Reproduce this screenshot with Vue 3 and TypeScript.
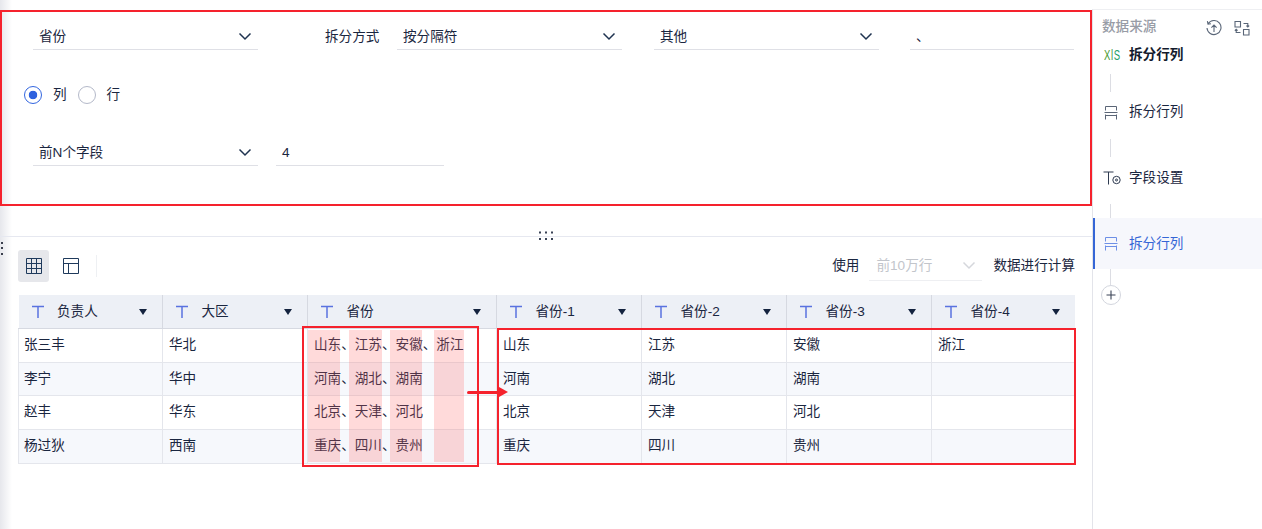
<script setup lang="ts">
interface Col { name: string; w: number }
const cols: Col[] = [
  { name: '负责人', w: 144 }, { name: '大区', w: 145 }, { name: '省份', w: 189 },
  { name: '省份-1', w: 145 }, { name: '省份-2', w: 145 }, { name: '省份-3', w: 145 }, { name: '省份-4', w: 143 },
]
const rows: string[][] = [
  ['张三丰', '华北', '山东、江苏、安徽、浙江', '山东', '江苏', '安徽', '浙江'],
  ['李宁', '华中', '河南、湖北、湖南', '河南', '湖北', '湖南', ''],
  ['赵丰', '华东', '北京、天津、河北', '北京', '天津', '河北', ''],
  ['杨过狄', '西南', '重庆、四川、贵州', '重庆', '四川', '贵州', ''],
]
const bars = [
  { left: 290, width: 32 }, { left: 331, width: 33 }, { left: 372, width: 32 }, { left: 416, width: 30 },
]
</script>

<template>
  <div class="root">
    <main class="main">
      <div class="edge"></div>
      <section class="panel">
        <div class="line first">
          <div class="field sel w225"><span>省份</span><svg class="chev" viewBox="0 0 14 9"><path d="M1.5 1.5 7 7l5.5-5.5" /></svg></div>
          <span class="lab">拆分方式</span>
          <div class="field sel w225"><span>按分隔符</span><svg class="chev" viewBox="0 0 14 9"><path d="M1.5 1.5 7 7l5.5-5.5" /></svg></div>
          <div class="field sel w225 g32"><span>其他</span><svg class="chev" viewBox="0 0 14 9"><path d="M1.5 1.5 7 7l5.5-5.5" /></svg></div>
          <div class="field w164 g31"><span>、</span></div>
        </div>
        <div class="radios">
          <span class="radio on"></span><span class="rtext">列</span>
          <span class="radio"></span><span class="rtext">行</span>
        </div>
        <div class="line third">
          <div class="field sel w225"><span>前N个字段</span><svg class="chev" viewBox="0 0 14 9"><path d="M1.5 1.5 7 7l5.5-5.5" /></svg></div>
          <div class="field w168 g18"><span>4</span></div>
        </div>
      </section>

      <div class="split">
        <svg class="grip" viewBox="0 0 15 10" width="15" height="10"><path d="M1 1.5h2v2H1zM7 1.5h2v2H7zM13 1.5h2v2h-2zM1 8h2v2H1zM7 8h2v2H7zM13 8h2v2h-2z" /></svg>
      </div>
      <svg class="vgrip" viewBox="0 0 4 14" width="4" height="14"><path d="M1 0h2v2H1zM1 5h2v2H1zM1 11h2v2H1z" /></svg>

      <div class="tools">
        <button class="tbtn active">
          <svg viewBox="0 0 16 16" width="16" height="16"><path d="M.5.5h15v15H.5zM5.5.5v15M10.5.5v15M.5 5.5h15M.5 10.5h15" /></svg>
        </button>
        <button class="tbtn">
          <svg viewBox="0 0 16 16" width="16" height="16"><path d="M.5.5h15v15H.5zM.5 5.5h15M5.5 5.5v10" /></svg>
        </button>
        <span class="tsep"></span>
        <span class="use">使用</span>
        <div class="limit"><span>前10万行</span><svg class="chev pale" viewBox="0 0 14 9"><path d="M1.5 1.5 7 7l5.5-5.5" /></svg></div>
        <span class="calc">数据进行计算</span>
      </div>

      <div class="tablewrap">
        <table class="grid">
          <colgroup><col v-for="c in cols" :key="c.name" :style="{ width: c.w + 'px' }" /></colgroup>
          <thead>
            <tr>
              <th v-for="c in cols" :key="c.name">
                <div class="th">
                  <svg class="tee" viewBox="0 0 14 14"><path d="M1 1.5h12M7 1.5V13" /></svg>
                  <span class="thname">{{ c.name }}</span>
                  <span class="caret"></span>
                </div>
              </th>
            </tr>
          </thead>
          <tbody>
            <tr v-for="(r, i) in rows" :key="i" :class="i % 2 === 1 ? 'alt' : 'odd'">
              <td v-for="(v, j) in r" :key="j">{{ v }}</td>
            </tr>
          </tbody>
        </table>
        <span v-for="b in bars" :key="b.left" class="bar" :style="{ left: b.left + 'px', width: b.width + 'px' }"></span>
        <span class="box leftbox"></span>
        <span class="box rightbox"></span>
        <span class="arrow"></span>
      </div>
    </main>

    <aside class="side">
      <div class="shead">
        <span class="stitle">数据来源</span>
        <svg class="hicon i1" viewBox="0 0 16 16"><path d="M2.2 3.6A7 7 0 1 1 1 8M1.4 1.2 2 4.2l3-.4M8 12V5.2M5.4 7.6 8 5l2.6 2.6" /></svg>
        <svg class="hicon i2" viewBox="0 0 16 16"><path d="M1 1.5h5.5V7H1zM9.5 9.5H15V15H9.5zM9.5 3.5h4.3V6.8M12.4 5.6l1.4 1.4 1.4-1.4M6.5 12.5H2.2V9.2M.8 10.6l1.4-1.4 1.4 1.4" /></svg>
      </div>
      <div class="step s1"><span class="xls"><span class="xlsin"><i>X</i><b>l</b><em>S</em></span></span><strong>拆分行列</strong></div>
      <span class="conn c1"></span>
      <div class="step s2">
        <svg class="sicon" viewBox="0 0 14 14"><path d="M1.5 4.5V.5h11v4M.5 6.5h13M1.5 8.5v5M12.5 8.5v5M1.5 9.5h11" /></svg><span>拆分行列</span>
      </div>
      <span class="conn c2"></span>
      <div class="step s3">
        <svg class="sicon wide" viewBox="0 0 18 14"><path d="M.5 1h10M5.5 1V13.5" /><circle cx="13.5" cy="9" r="3.7" /><circle cx="13.5" cy="9" r="1" /></svg><span>字段设置</span>
      </div>
      <span class="conn c3"></span>
      <div class="step current">
        <svg class="sicon" viewBox="0 0 14 14"><path d="M1.5 4.5V.5h11v4M.5 6.5h13M1.5 8.5v5M12.5 8.5v5M1.5 9.5h11" /></svg><span>拆分行列</span>
      </div>
      <span class="conn c4"></span>
      <div class="plus"><svg viewBox="0 0 10 10" width="10" height="10"><path d="M5 .5v9M.5 5h9" /></svg></div>
    </aside>
  </div>
</template>

<style scoped>
.root {
  display: flex; width: 1262px; height: 529px; overflow: hidden; background: #fff;
  font: 13.6px/18px "Liberation Sans", "Noto Sans CJK SC", sans-serif; color: #1a2640;
}
.main { position: relative; width: 1092px; flex: none; padding-top: 10px; box-sizing: border-box; }
.edge { position: absolute; left: 0; top: 0; bottom: 0; width: 12px; background: linear-gradient(90deg, #e6e7ec, #fff); }
.panel { position: relative; height: 196px; border: 2px solid #f5222d; box-sizing: border-box; padding: 10px 16px 0 31px; }
.line { display: flex; align-items: flex-end; }
.field { display: flex; align-items: center; justify-content: space-between; height: 28px; padding: 3px 6px 1px 6px; box-sizing: border-box; border-bottom: 1px solid #dfe0e6; }
.w225 { width: 225px; }
.w164 { width: 164px; }
.w168 { width: 168px; }
.g32 { margin-left: 32px; }
.g31 { margin-left: 31px; }
.g18 { margin-left: 18px; }
.lab { width: 55px; margin: 0 17px 0 67px; height: 28px; line-height: 30px; white-space: nowrap; }
.chev { width: 14px; height: 9px; fill: none; stroke: #1f3350; stroke-width: 1.5; }
.chev.pale { stroke: #d5d7dc; }
.radios { display: flex; align-items: center; margin: 35px 0 0 -9px; height: 20px; }
.radio { width: 16px; height: 16px; border: 1px solid #b4b9c9; border-radius: 50%; }
.radio.on { border-color: #3366e0; background: radial-gradient(circle, #2f62de 0 4px, #fff 4.6px); }
.rtext { margin: 0 11px 0 11px; }
.third { margin-top: 33px; }
.split { position: relative; height: 1px; margin-top: 30px; background: #e6e8f0; }
.grip { position: absolute; left: 538px; top: -6px; fill: #3a4356; }
.vgrip { position: absolute; left: 0; top: 242px; fill: #3a3f4d; }
.tools { display: flex; align-items: center; height: 32px; margin: 13px 17px 0 18px; }
.tbtn { width: 31px; height: 32px; display: flex; align-items: center; justify-content: center; padding: 0; border: 0; border-radius: 3px; background: transparent; margin-right: 6px; }
.tbtn.active { background: #e6e7eb; }
.tbtn svg { fill: none; stroke: #1f3a5c; stroke-width: 1; }
.tsep { width: 1px; height: 22px; margin-left: 4px; background: #eef0f3; }
.use { margin-left: auto; }
.limit { display: flex; align-items: center; justify-content: space-between; width: 113px; height: 30px; margin: 0 11px 0 10px; padding: 0 6px 0 7px; box-sizing: border-box; border-bottom: 1px solid #eeeff2; color: #c2c5cb; }
.tablewrap { position: relative; margin: 13px 0 0 18px; width: 1056px; }
.grid { border-collapse: collapse; table-layout: fixed; width: 1056px; }
th { height: 33px; padding: 0; background: #edf0f6; border-right: 1px solid #d6d9e1; border-bottom: 1px solid #d6d9e1; font-weight: 400; }
th:last-child { border-right: 0; }
.th { display: flex; align-items: center; padding: 0 15px 0 12px; }
.tee { width: 14px; height: 14px; fill: none; stroke: #5a72e0; stroke-width: 1.5; flex: none; }
.thname { margin-left: 12.5px; }
.caret { margin-left: auto; width: 0; height: 0; border: 4.5px solid transparent; border-top: 6px solid #14233f; border-bottom: 0; }
td { padding: 0 6px; border: 1px solid #e4e6ec; box-sizing: border-box; white-space: nowrap; }
td:first-child { padding-left: 5px; }
tr.odd td { height: 34px; padding-bottom: 2px; }
tr.alt td { height: 33px; background: #f6f8fc; }
tr.alt:last-child td { height: 34px; padding-bottom: 2px; }
.bar { position: absolute; top: 35px; height: 132px; background: rgba(255, 100, 100, .24); }
.box { position: absolute; border: 2px solid #f5222d; box-sizing: border-box; }
.leftbox { left: 284px; top: 31px; width: 177px; height: 141px; }
.rightbox { left: 479px; top: 33px; width: 579px; height: 137px; }
.arrow { position: absolute; left: 449px; top: 96px; width: 32px; height: 3px; background: #f5222d; border-radius: 2px; }
.arrow::after { content: ""; position: absolute; left: 32px; top: -4px; border-left: 9px solid #f5222d; border-top: 5px solid transparent; border-bottom: 5px solid transparent; }
.side { position: relative; flex: 1; margin-top: 9px; border-left: 1px solid #e3e4ea; border-top: 1px solid #eeeff2; box-sizing: border-box; }
.shead { position: relative; height: 34px; }
.stitle { position: absolute; left: 9px; top: 8px; font-weight: 500; color: #989ca6; white-space: nowrap; }
.hicon { position: absolute; top: 10px; width: 16px; height: 16px; fill: none; stroke: #5a6678; stroke-width: 1.1; }
.i1 { left: 113px; }
.i2 { left: 141px; }
.step { display: flex; align-items: center; height: 20px; line-height: 20px; padding-left: 10px; white-space: nowrap; }
.step > span:last-child, .step > strong { position: relative; top: 1px; }
strong { font-weight: 700; color: #121a2c; }
.xls { display: block; width: 26px; height: 16px; flex: none; padding-left: 1px; margin-right: -1px; }
.xlsin { display: inline-flex; font-size: 14px; line-height: 16px; transform: scaleX(.68); transform-origin: left center; }
.xlsin i { font-style: normal; color: #4a9a2e; }
.xlsin b { font-weight: 400; color: #3f9a3e; margin: 0 1px; }
.xlsin em { font-style: normal; color: #1fa06a; }
.sicon { width: 14px; height: 14px; margin: 3px 11px 0 1px; fill: none; stroke: #5b6576; stroke-width: 1; flex: none; }
.sicon.wide { width: 18px; height: 14px; margin: 2px 8px 0 0; stroke: #2e3a50; }
.conn { display: block; width: 1px; background: #dcdde3; margin-left: 17px; }
.c1 { height: 18px; margin-top: 10px; }
.s2 { margin-top: 9px; }
.c2 { height: 18px; margin-top: 18px; }
.s3 { margin-top: 10px; }
.c3 { height: 14px; margin-top: 17px; }
.current { height: 51px; color: #3566d6; background: #f6f7fc; border-left: 2px solid #3566d6; padding-left: 8px; padding-bottom: 2px; box-sizing: border-box; }
.current .sicon { stroke: #6d8fe6; }
.c4 { height: 16px; }
.plus { display: flex; align-items: center; justify-content: center; width: 18px; height: 18px; margin-left: 8px; border: 1px solid #d3d6de; border-radius: 50%; }
.plus svg { fill: none; stroke: #3a4356; stroke-width: 1.1; }
</style>

<style>
html, body { margin: 0; background: #fff; }
</style>
